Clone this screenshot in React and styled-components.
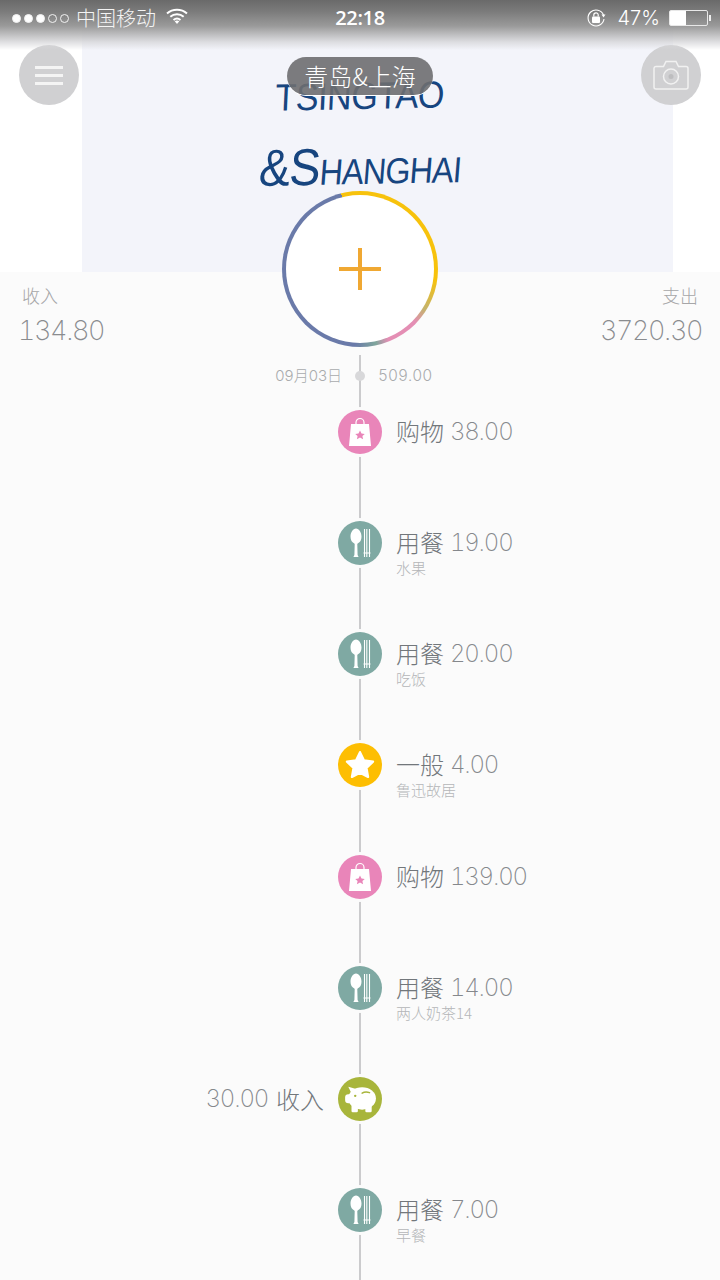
import React from "react";
import styled, { createGlobalStyle } from "styled-components";

const Global = createGlobalStyle`
  html, body { margin: 0; padding: 0; background: #fbfbfb; }
  body { font-family: "Inter", "Noto Sans CJK SC", sans-serif; }
  * { box-sizing: border-box; }
`;

const CJK = `"Noto Sans CJK SC", sans-serif`;
const LATIN = `"Inter", "Noto Sans CJK SC", sans-serif`;

const Page = styled.div`
  position: relative;
  width: 720px;
  height: 1280px;
  overflow: hidden;
  background: #fbfbfb;
`;

/* ---------- status bar ---------- */
const StatusBar = styled.div`
  position: absolute;
  inset: 0 0 auto 0;
  height: 50px;
  padding: 6px 12px 0;
  display: grid;
  grid-template-columns: 1fr auto 1fr;
  align-items: start;
  color: #fff;
  background: linear-gradient(to bottom, #6a6a6a 0, #7c7c7c 12px, #9a9a9a 26px, rgba(215, 215, 218, 0.8) 42px, rgba(245, 245, 250, 0) 50px);
  z-index: 3;
`;
const StatusLeft = styled.div`
  display: flex;
  align-items: center;
  height: 24px;
`;
const StatusRight = styled.div`
  display: flex;
  align-items: center;
  justify-content: flex-end;
  height: 24px;
`;
const Signal = styled.span`
  display: flex;
  gap: 3px;
  margin-right: 7px;
`;
const Dot = styled.i`
  width: 9px;
  height: 9px;
  border-radius: 50%;
  border: 1px solid #f2f2f2;
  background: ${(p) => (p.$on ? "#fff" : "transparent")};
`;
const Carrier = styled.span`
  font: 300 20px/24px ${CJK};
  margin-right: 10px;
  color: #f4f4f4;
`;
const Clock = styled.span`
  font: 600 20px/24px "Open Sans", sans-serif;
  letter-spacing: -0.3px;
`;
const Percent = styled.span`
  font: 300 20px/24px ${LATIN};
  margin: 0 9px 0 11px;
`;
const Battery = styled.span`
  position: relative;
  display: block;
  width: 39px;
  height: 16px;
  border: 1px solid #e8e8e8;
  border-radius: 2px;
  background: linear-gradient(to right, #fff 44%, transparent 44%);
  &::after {
    content: "";
    position: absolute;
    right: -4px;
    top: 4px;
    width: 2px;
    height: 6px;
    background: #eee;
  }
`;

/* ---------- hero ---------- */
const Hero = styled.header`
  position: relative;
  height: 272px;
  background: #fff;
`;
const CoverArt = styled.div`
  width: 591px;
  height: 272px;
  margin-left: 82px;
  padding: 77px 35px 0 0;
  background: #f3f4fa;
  display: flex;
  flex-direction: column;
  align-items: center;
  color: #17457f;
`;
const LogoTop = styled.div`
  font: 400 38px/38px "Liberation Sans", sans-serif;
  letter-spacing: -0.5px;
  transform: scaleX(0.9) rotate(-1deg) skewX(-4deg);
  white-space: nowrap;
`;
const LogoBottom = styled.div`
  margin-top: 26px;
  font: 400 36px/50px "Liberation Sans", sans-serif;
  letter-spacing: -1px;
  transform: scaleX(0.9) rotate(-1deg) skewX(-6deg);
  white-space: nowrap;
`;
const LogoBig = styled.span`
  font-size: 52px;
`;
const Nav = styled.nav`
  position: absolute;
  inset: 45px 19px auto 19px;
  display: flex;
  justify-content: space-between;
  align-items: flex-start;
`;
const RoundButton = styled.button`
  width: 60px;
  height: 60px;
  padding: 0;
  border: 0;
  border-radius: 50%;
  background: #d0d0d2;
  display: flex;
  flex-direction: column;
  align-items: center;
  justify-content: center;
  gap: 5px;
`;
const MenuBar = styled.i`
  display: block;
  width: 28px;
  height: 3px;
  background: #f4f4f4;
`;
const TitlePill = styled.div`
  margin-top: 12px;
  width: 146px;
  height: 38px;
  border-radius: 19px;
  background: rgba(110, 110, 112, 0.9);
  box-shadow: 0 1px 0 #fff;
  color: #fff;
  text-align: center;
  font: 300 24px/38px ${CJK};
  white-space: nowrap;
`;
const Fab = styled.div`
  position: absolute;
  left: 282px;
  top: 191px;
  width: 156px;
  height: 156px;
  border-radius: 50%;
  background: conic-gradient(
    #f7c20c 0deg,
    #f7c20c 98deg,
    #c4b36e 122deg,
    #e48eb4 134deg,
    #e48eb4 158deg,
    #7fa69c 168deg,
    #6a7aa9 184deg,
    #6a7aa9 346deg,
    #f7c20c 346deg
  );
  display: flex;
  align-items: center;
  justify-content: center;
  z-index: 2;
  &::before {
    content: "";
    position: absolute;
    inset: 4px;
    border-radius: 50%;
    background: #fff;
  }
  &::after {
    content: "";
    position: relative;
    width: 42px;
    height: 42px;
    background:
      linear-gradient(#f0a832, #f0a832) center / 42px 4px no-repeat,
      linear-gradient(#f0a832, #f0a832) center / 4px 42px no-repeat;
  }
`;

/* ---------- totals ---------- */
const Totals = styled.section`
  height: 83px;
  display: flex;
  justify-content: space-between;
  padding: 10px 18px 0;
`;
const Total = styled.div`
  text-align: ${(p) => (p.$right ? "right" : "left")};
`;
const TotalLabel = styled.div`
  font: 300 18px/26px ${CJK};
  color: #a6a6a8;
  padding: 0 4px;
`;
const TotalValue = styled.div`
  margin-top: 3px;
  font: 200 27px/40px ${LATIN};
  font-variant-numeric: tabular-nums;
  letter-spacing: -1.400px;
  color: #8a8c8f;
`;

/* ---------- timeline ---------- */
const Timeline = styled.section`
  position: relative;
  &::before {
    content: "";
    position: absolute;
    top: 0;
    bottom: 0;
    left: 359px;
    width: 2px;
    background: #cbcbcd;
  }
`;
const DayRow = styled.div`
  position: relative;
  height: 42px;
  margin-bottom: 13px;
  display: grid;
  grid-template-columns: 1fr 36px 1fr;
  align-items: center;
  color: #a9abad;
`;
const DayDate = styled.span`
  font: 300 15px/20px ${LATIN};
  text-align: right;
`;
const DayDot = styled.i`
  justify-self: center;
  width: 10px;
  height: 10px;
  border-radius: 50%;
  background: #d8d8da;
`;
const DayTotal = styled.span`
  font: 300 15.500px/20px ${LATIN};
  font-variant-numeric: tabular-nums;
`;
const Row = styled.article`
  position: relative;
  height: 111.14px;
  display: grid;
  grid-template-columns: 324px 44px 1fr;
  column-gap: 14px;
`;
const IconDisc = styled.div`
  grid-column: 2;
  width: 44px;
  height: 44px;
  border-radius: 50%;
  background: ${(p) => p.$color};
  box-shadow: 0 0 0 3px #fbfbfb;
  display: flex;
  align-items: center;
  justify-content: center;
`;
const Left = styled.div`
  grid-column: 1;
  display: flex;
  justify-content: flex-end;
  align-items: center;
  height: 44px;
  gap: 8px;
`;
const Right = styled.div`
  grid-column: 3;
`;
const Line = styled.div`
  display: flex;
  align-items: flex-start;
  gap: 6px;
  height: 36px;
  margin-top: 4px;
`;
const Title = styled.span`
  font: 300 24px/34px ${CJK};
  color: #72777b;
`;
const Amount = styled.span`
  font: 200 24px/36px ${LATIN};
  font-variant-numeric: tabular-nums;
  color: #85888c;
  letter-spacing: -1.200px;
`;
const Note = styled.div`
  font: 300 15px/14px ${CJK};
  color: #b4b6b8;
`;
const Glyph = styled.svg`
  display: block;
  flex: none;
`;

/* ---------- icons ---------- */
const Bag = ({ fill }) => (
  <Glyph width="24" height="30" viewBox="0 0 24 30">
    <path d="M8 8V5.500a4 4 0 0 1 8 0V8" fill="none" stroke="#fff" strokeWidth="1.200" />
    <path d="M3 7h18l2 22H1z" fill="#fff" />
    <path d="M12 13.500l1.500 3 3.300.4-2.400 2.200.7 3.200-3.100-1.700-3.100 1.700.7-3.200-2.400-2.200 3.300-.4z" fill={fill} />
  </Glyph>
);
const Cutlery = () => (
  <Glyph width="21" height="30" viewBox="0 0 21 30">
    <path d="M6 .5C9 .5 11.500 4.300 11.500 8.700c0 3.300-1.500 5.700-3.500 6.500-.5.200-.7.600-.7 1.100L7.600 27l1 2H3.400l1-2 .3-10.700c0-.5-.2-.9-.7-1.100C2 14.400.5 12 .5 8.700.5 4.300 3 .5 6 .5z" fill="#fff" />
    <path d="M14.500 1v28M16.800 1v28M19.500 1v28" fill="none" stroke="#fff" strokeWidth="1.100" />
    <path d="M13.500 25h7" stroke="#fff" strokeWidth="1" />
  </Glyph>
);
const StarIcon = () => (
  <Glyph width="32" height="32" viewBox="0 0 36 36">
    <path
      d="M18 3.500l4.500 9.300 10.200 1.400-7.400 7.100 1.800 10.100L18 26.600l-9.100 4.800 1.800-10.100-7.400-7.100 10.200-1.400z"
      fill="#fff"
      stroke="#fff"
      strokeWidth="2.500"
      strokeLinejoin="round"
    />
  </Glyph>
);
const Pig = ({ fill }) => (
  <Glyph width="34" height="30" viewBox="0 0 32 28">
    <ellipse cx="18" cy="13.500" rx="13" ry="10.500" fill="#fff" />
    <rect x="2" y="9.500" width="9" height="8.500" rx="3" fill="#fff" />
    <path d="M5 2.500l9 2.500-5 6z" fill="#fff" />
    <rect x="8" y="19" width="6" height="7.500" rx="1.200" fill="#fff" />
    <rect x="21" y="19" width="6" height="7.500" rx="1.200" fill="#fff" />
    <path d="M18 8.500c2-1.200 4.500-1.300 7-.5" fill="none" stroke={fill} strokeWidth="1.400" strokeLinecap="round" />
    <circle cx="11.500" cy="11" r="1.100" fill={fill} />
  </Glyph>
);
const Wifi = () => (
  <Glyph width="22" height="16" viewBox="0 0 22 16" style={{ marginTop: -4 }}>
    <path d="M1 5.500c5.600-5 14.400-5 20 0M4.300 8.800c3.800-3.300 9.600-3.300 13.400 0M7.500 12c2-1.700 5-1.700 7 0" fill="none" stroke="#fff" strokeWidth="2" />
    <path d="M11 16l-2.300-2.700c1.400-1 3.200-1 4.600 0z" fill="#fff" />
  </Glyph>
);
const RotationLock = () => (
  <Glyph width="20" height="20" viewBox="0 0 20 20">
    <path d="M17.500 7A8 8 0 1 0 18 11" fill="none" stroke="#fff" strokeWidth="1.100" />
    <path d="M15.500 6.500h4L17.500 9.500z" fill="#fff" />
    <rect x="6" y="8.500" width="8" height="6.500" rx="1" fill="#fff" />
    <path d="M7.800 8.500V7a2.200 2.200 0 0 1 4.400 0v1.500" fill="none" stroke="#fff" strokeWidth="1.200" />
  </Glyph>
);
const CameraIcon = () => (
  <Glyph width="36" height="30" viewBox="0 0 36 30">
    <path d="M3 6.500h7.500L13 1.500h10l2.500 5H33a2 2 0 0 1 2 2V27a2 2 0 0 1-2 2H3a2 2 0 0 1-2-2V8.500a2 2 0 0 1 2-2z" fill="none" stroke="#f1f1f1" strokeWidth="1.500" />
    <circle cx="18" cy="16.500" r="7.500" fill="none" stroke="#f1f1f1" strokeWidth="1.500" />
    <circle cx="18" cy="16.500" r="2.500" fill="#bdbdbf" />
  </Glyph>
);

const KINDS = {
  shop: { label: "购物", color: "#e985b9", icon: <Bag fill="#e985b9" /> },
  meal: { label: "用餐", color: "#7fa9a3", icon: <Cutlery /> },
  general: { label: "一般", color: "#fdbe02", icon: <StarIcon /> },
  income: { label: "收入", color: "#a8b53b", icon: <Pig fill="#a8b53b" /> },
};

const ENTRIES = [
  { kind: "shop", amount: "38.00" },
  { kind: "meal", amount: "19.00", note: "水果" },
  { kind: "meal", amount: "20.00", note: "吃饭" },
  { kind: "general", amount: "4.00", note: "鲁迅故居" },
  { kind: "shop", amount: "139.00" },
  { kind: "meal", amount: "14.00", note: "两人奶茶14" },
  { kind: "income", amount: "30.00" },
  { kind: "meal", amount: "7.00", note: "早餐" },
];

export default function App() {
  return (
    <Page>
      <Global />
      <StatusBar>
        <StatusLeft>
          <Signal>
            {[1, 1, 1, 0, 0].map((on, i) => (
              <Dot key={i} $on={!!on} />
            ))}
          </Signal>
          <Carrier>中国移动</Carrier>
          <Wifi />
        </StatusLeft>
        <Clock>22:18</Clock>
        <StatusRight>
          <RotationLock />
          <Percent>47%</Percent>
          <Battery />
        </StatusRight>
      </StatusBar>

      <Hero>
        <CoverArt>
          <LogoTop>TSINGTAO</LogoTop>
          <LogoBottom>
            <LogoBig>&amp;S</LogoBig>HANGHAI
          </LogoBottom>
        </CoverArt>
        <Nav>
          <RoundButton aria-label="menu">
            <MenuBar />
            <MenuBar />
            <MenuBar />
          </RoundButton>
          <TitlePill>青岛&amp;上海</TitlePill>
          <RoundButton aria-label="camera">
            <CameraIcon />
          </RoundButton>
        </Nav>
        <Fab />
      </Hero>

      <Totals>
        <Total>
          <TotalLabel>收入</TotalLabel>
          <TotalValue>134.80</TotalValue>
        </Total>
        <Total $right>
          <TotalLabel>支出</TotalLabel>
          <TotalValue>3720.30</TotalValue>
        </Total>
      </Totals>

      <Timeline>
        <DayRow>
          <DayDate>09月03日</DayDate>
          <DayDot />
          <DayTotal>509.00</DayTotal>
        </DayRow>
        {ENTRIES.map((e, i) => {
          const k = KINDS[e.kind];
          return (
            <Row key={i}>
              {e.kind === "income" && (
                <Left>
                  <Amount>{e.amount}</Amount>
                  <Title>{k.label}</Title>
                </Left>
              )}
              <IconDisc $color={k.color}>{k.icon}</IconDisc>
              {e.kind !== "income" && (
                <Right>
                  <Line>
                    <Title>{k.label}</Title>
                    <Amount>{e.amount}</Amount>
                  </Line>
                  {e.note && <Note>{e.note}</Note>}
                </Right>
              )}
            </Row>
          );
        })}
      </Timeline>
    </Page>
  );
}
